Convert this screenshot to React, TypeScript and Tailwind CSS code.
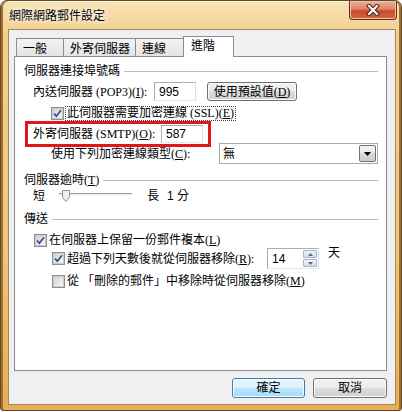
const U = ({ c }: { c: string }) => <span className="underline underline-offset-[1px]">{c}</span>;

const Check = ({ checked }: { checked?: boolean }) => (
  <span className="flex h-[13px] w-[13px] shrink-0 items-center justify-center border border-[#8e8f8f] bg-white">
    <span className="flex h-[11px] w-[11px] items-center justify-center border border-[#c8cbd0] bg-[linear-gradient(135deg,#cdd1d7,#f7f7f7)]">
      {checked && (
        <svg width="9" height="9" viewBox="0 0 9 9">
          <path d="M1 4.6 L3.4 7.2 L8 1.2" fill="none" stroke="#3b4f87" strokeWidth="1.7" />
        </svg>
      )}
    </span>
  </span>
);

const Group = ({ label, className = "" }: { label: React.ReactNode; className?: string }) => (
  <div className={`flex h-[14px] items-center ${className}`}>
    <span className="leading-[14px] whitespace-nowrap">{label}</span>
    <span className="ml-[4px] h-px flex-1 bg-[#b9bcc0]" />
  </div>
);

const Edit = ({ value, className = "" }: { value: string; className?: string }) => (
  <div
    className={`flex items-center border border-[#abadb3] border-b-[#e3e9ef] border-r-[#dbdfe6] bg-white pl-[4px] font-['Liberation_Sans',sans-serif] text-[12px] ${className}`}
  >
    {value}
  </div>
);

const WinButton = ({
  children,
  primary,
  className = "",
}: {
  children: React.ReactNode;
  primary?: boolean;
  className?: string;
}) => (
  <div
    className={`flex items-center justify-center rounded-[3px] border leading-[14px] shadow-[inset_0_0_0_1px_#fbfbfb] ${
      primary
        ? "border-[#3c7fb1] bg-[linear-gradient(#eaf6fd_0%,#d9f0fc_50%,#bee6fd_50%,#a7d9f5_100%)]"
        : "border-[#707070] bg-[linear-gradient(#f2f2f2_0%,#ebebeb_50%,#dddddd_50%,#cfcfcf_100%)]"
    } ${className}`}
  >
    {children}
  </div>
);

const Tab = ({ label, className = "" }: { label: string; className?: string }) => (
  <div
    className={`flex h-[18px] items-center border border-b-0 border-[#898c95] bg-[linear-gradient(#f4f4f4,#e3e3e3)] pl-[6px] pt-[2px] leading-[14px] ${className}`}
  >
    {label}
  </div>
);

export default function App() {
  return (
    <div className="h-[412px] w-[402px] bg-white font-['Liberation_Serif','Noto_Sans_CJK_TC',serif] text-[12px] text-black">
      <div className="flex h-[411px] w-[402px] flex-col rounded-t-[7px] rounded-b-[3px] border border-[#5e4a2c] bg-[linear-gradient(#f7e3b6_0%,#f2d08e_8%,#efc67a_60%,#e9ad52_100%)] shadow-[inset_2px_0_0_#a2702c,inset_-2px_0_0_#a2702c,inset_0_1px_0_#fff4d8]">
        {/* title bar */}
        <div className="flex h-[28px] items-start">
          <span className="ml-[8px] mt-[7px] leading-[14px] font-['Noto_Sans_CJK_TC',sans-serif] [text-shadow:0_0_6px_#fff,0_0_3px_#fff]">
            網際網路郵件設定
          </span>
          <div className="ml-auto mr-[4px] flex h-[19px] w-[48px] items-center justify-center rounded-b-[4px] border border-t-0 border-[#6a2a18] bg-[linear-gradient(#eab0a0_0%,#e08366_45%,#c8482a_55%,#d36a45_100%)] shadow-[inset_0_0_0_1px_#f3c2b0]">
            <svg width="16" height="12" viewBox="0 0 16 12">
              <path d="M4 2 L12 10 M12 2 L4 10" stroke="#4a1e14" strokeWidth="4.2" strokeLinecap="square" />
              <path d="M4 2 L12 10 M12 2 L4 10" stroke="#ffffff" strokeWidth="2.2" strokeLinecap="square" />
            </svg>
          </div>
        </div>

        {/* client area */}
        <div className="ml-[7px] flex h-[376px] w-[388px] flex-col border border-[#9c8862] bg-[#f0f0f0] pt-[6px]">
          <div className="flex items-end pl-[7px]">
            <Tab label="一般" className="w-[48px]" />
            <Tab label="外寄伺服器" className="-ml-px w-[73px]" />
            <Tab label="連線" className="-ml-px w-[49px]" />
            <div className="relative z-10 -mb-px -ml-px flex h-[21px] w-[51px] items-start border border-b-0 border-[#898c95] bg-white pl-[7px] pt-[2px] leading-[14px]">
              進階
            </div>
          </div>

          <div className="ml-[5px] flex h-[315px] w-[373px] flex-col border border-[#898c95] bg-white pl-[9px] pr-[8px] pt-[7px]">
            <Group label="伺服器連接埠號碼" />

            <div className="ml-[9px] mt-[4px] flex h-[19px] items-center">
              <span className="w-[121px] leading-[14px] whitespace-nowrap">
                內送伺服器 (POP3)(<U c="I" />):
              </span>
              <Edit value="995" className="h-[19px] w-[42px]" />
              <WinButton className="ml-[11px] h-[19px] w-[90px]">
                使用預設值(<U c="D" />)
              </WinButton>
            </div>

            <div className="ml-[27px] mt-[5px] flex h-[15px] items-center gap-[1px]">
              <Check checked />
              <span className="flex h-[15px] items-center border border-dotted border-[#444] px-[1px] leading-[13px] whitespace-nowrap">
                此伺服器需要加密連線 (SSL)(<U c="E" />)
              </span>
            </div>

            <div className="ml-[1px] flex h-[26px] w-[186px] items-center border-[3px] border-[#e3151c] pl-[5px]">
              <span className="w-[128px] leading-[14px] whitespace-nowrap">
                外寄伺服器 (SMTP)(<U c="O" />):
              </span>
              <Edit value="587" className="h-[18px] w-[42px]" />
            </div>

            <div className="ml-[27px] -mt-[4px] flex h-[21px] items-center">
              <span className="w-[168px] leading-[14px] whitespace-nowrap">
                使用下列加密連線類型(<U c="C" />):
              </span>
              <div className="flex h-[21px] w-[159px] items-center border border-[#a5a9b0] bg-white pl-[3px] pr-[1px]">
                <span className="flex-1 leading-[14px]">無</span>
                <div className="flex h-[17px] w-[17px] items-center justify-center rounded-[2px] border border-[#707070] bg-[linear-gradient(#f4f4f4_0%,#e8e8e8_50%,#d9d9d9_50%,#cdcdcd_100%)]">
                  <svg width="7" height="4" viewBox="0 0 7 4">
                    <path d="M0 0 H7 L3.5 4 Z" fill="#000" />
                  </svg>
                </div>
              </div>
            </div>

            <Group label={<>伺服器逾時(<U c="T" />)</>} className="mt-[9px]" />

            <div className="ml-[9px] mt-[2px] flex h-[14px] items-center">
              <span className="leading-[14px]">短</span>
              <div className="relative ml-[14px] h-[14px] w-[73px]">
                <div className="absolute left-0 top-[4px] h-[2px] w-[73px] border-t border-[#a0a0a0] border-b border-b-[#e8e8e8]" />
                <svg className="absolute left-[3px] top-[1px]" width="8" height="12" viewBox="0 0 8 12">
                  <path d="M0.5 0.5 H7.5 V7.5 L4 11.5 L0.5 7.5 Z" fill="#eceff2" stroke="#8b9099" strokeWidth="1" />
                </svg>
              </div>
              <span className="ml-[15px] leading-[14px]">長</span>
              <span className="ml-[8px] leading-[14px] font-['Liberation_Sans','Noto_Sans_CJK_TC',sans-serif]">1 分</span>
            </div>

            <Group label="傳送" className="mt-[9px]" />

            <div className="ml-[10px] mt-[7px] flex h-[14px] items-center gap-[2px]">
              <Check checked />
              <span className="leading-[14px] whitespace-nowrap">
                在伺服器上保留一份郵件複本(<U c="L" />)
              </span>
            </div>

            <div className="ml-[28px] mt-[1px] flex h-[21px] items-center">
              <div className="flex w-[215px] items-center gap-[2px]">
                <Check checked />
                <span className="leading-[14px] whitespace-nowrap">
                  超過下列天數後就從伺服器移除(<U c="R" />):
                </span>
              </div>
              <div className="flex h-[21px] w-[52px] items-center border border-[#abadb3] border-b-[#e3e9ef] border-r-[#dbdfe6] bg-white pl-[4px] pr-[1px]">
                <span className="flex-1 font-['Liberation_Sans',sans-serif]">14</span>
                <div className="flex w-[14px] flex-col gap-[1px]">
                  <div className="flex h-[8px] items-center justify-center rounded-[1px] border border-[#a6b4c4] bg-[linear-gradient(#f0f4f8,#d5dfea)]">
                    <svg width="5" height="3" viewBox="0 0 5 3">
                      <path d="M0 3 H5 L2.5 0 Z" fill="#4b6a91" />
                    </svg>
                  </div>
                  <div className="flex h-[8px] items-center justify-center rounded-[1px] border border-[#a6b4c4] bg-[linear-gradient(#f0f4f8,#d5dfea)]">
                    <svg width="5" height="3" viewBox="0 0 5 3">
                      <path d="M0 0 H5 L2.5 3 Z" fill="#4b6a91" />
                    </svg>
                  </div>
                </div>
              </div>
              <span className="-mt-[12px] ml-[9px] leading-[14px]">天</span>
            </div>

            <div className="ml-[28px] mt-[5px] flex h-[14px] items-center gap-[2px]">
              <Check />
              <span className="leading-[14px] whitespace-nowrap">
                從 「刪除的郵件」中移除時從伺服器移除(<U c="M" />)
              </span>
            </div>
          </div>

          <div className="ml-[5px] mt-[7px] flex w-[373px] justify-end gap-[8px]">
            <WinButton primary className="h-[20px] w-[73px]">
              確定
            </WinButton>
            <WinButton className="h-[20px] w-[74px]">取消</WinButton>
          </div>
        </div>
      </div>
    </div>
  );
}
